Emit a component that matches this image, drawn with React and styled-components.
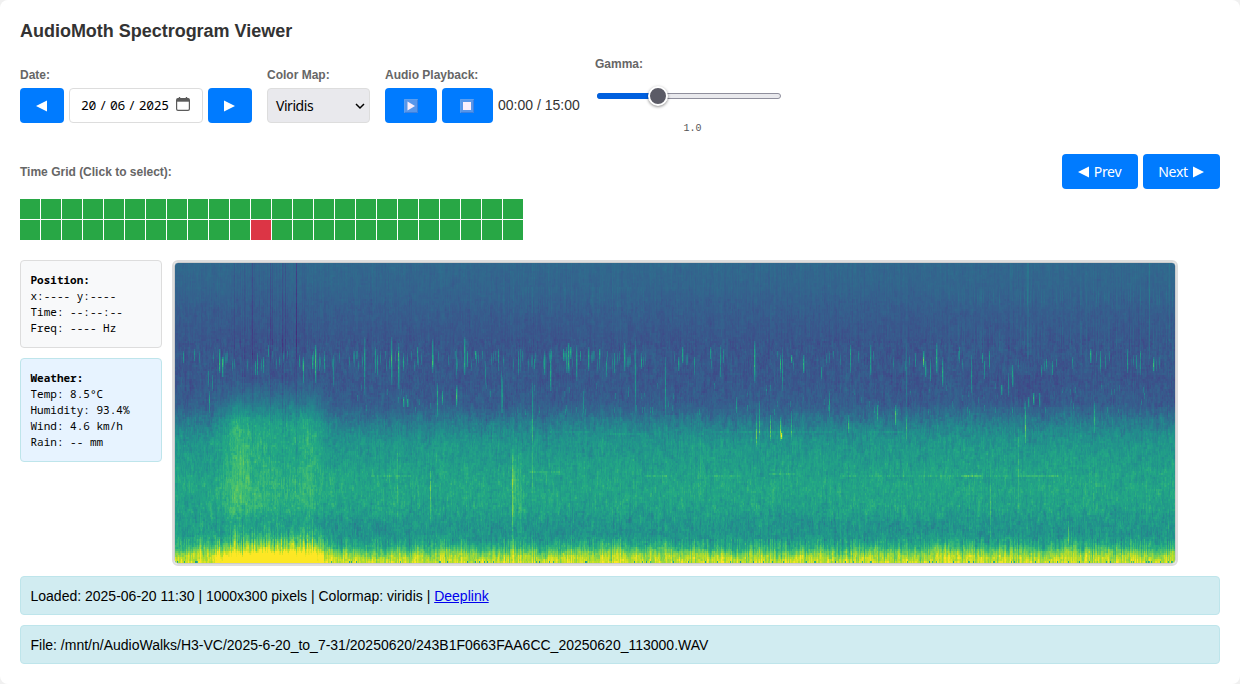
import React, { useLayoutEffect, useRef } from "react";
import styled, { createGlobalStyle, css } from "styled-components";

const GlobalStyle = createGlobalStyle`
  *, *::before, *::after { box-sizing: border-box; }
  body {
    margin: 0;
    background: #f0f0f0;
    color: #000;
    font-family: "Liberation Sans", Arial, sans-serif;
    font-size: 14px;
  }
`;

const mono = `"Noto Sans Mono", "DejaVu Sans Mono", monospace`;

const Page = styled.main`
  height: 684px;
  padding: 20px;
  background: #fff;
  border-radius: 8px;
  display: flex;
  flex-direction: column;
`;

const Title = styled.h1`
  margin: 0 0 15px;
  padding-top: 1px;
  font-size: 18px;
  line-height: 21px;
  letter-spacing: -0.02px;
  color: #333;
`;

const Controls = styled.section`
  display: flex;
  align-items: center;
  gap: 15px;
  height: 77px;
  margin-bottom: 20px;
`;

const Group = styled.div`
  display: flex;
  flex-direction: column;
  gap: 6px;
`;

const Label = styled.label`
  font-size: 12px;
  line-height: 14px;
  font-weight: bold;
  color: #666;
`;

const Row = styled.div`
  display: flex;
  align-items: center;
  gap: 5px;
`;

const Button = styled.button`
  width: ${(p) => p.$w}px;
  height: 35px;
  padding: 0 1px 0 0;
  border: 0;
  border-radius: 4px;
  background: #007bff;
  color: #fff;
  font: 14px/35px "Noto Sans", sans-serif;
  letter-spacing: -0.3px;
  display: flex;
  align-items: center;
  justify-content: center;
  gap: 5px;
`;

const field = css`
  height: 35px;
  border: 1px solid #ddd;
  border-radius: 4px;
  display: flex;
  align-items: center;
`;

const DateField = styled.div`
  ${field}
  width: 134px;
  padding: 0 12px 1px 11px;
  font: 13px ${mono};
  letter-spacing: -0.3px;
  justify-content: space-between;
  svg { margin-top: -3px; }
`;

const DateParts = styled.span`
  display: flex;
  gap: 3.2px;
`;

const Select = styled.div`
  ${field}
  width: 103px;
  padding: 0 4px 0 8px;
  background: #e9e9ed;
  justify-content: space-between;
  font: 14px "Noto Sans", sans-serif;
  letter-spacing: -0.45px;
`;

const Clock = styled.span`
  width: 82px;
  padding-bottom: 1px;
  color: #333;
  white-space: nowrap;
`;

const GammaGroup = styled.div`
  width: 195px;
  height: 77px;
  display: flex;
  flex-direction: column;
`;

const Track = styled.div`
  width: 184px;
  height: 6px;
  margin: 22px 0 0 2px;
  border: 1px solid #8f8f9d;
  border-radius: 3px;
  background: #e9e9ed;
  display: flex;
  align-items: center;
`;

const Fill = styled.div`
  width: 61px;
  height: 6px;
  margin-left: -1px;
  border-radius: 3px 0 0 3px;
  background: #0060df;
  flex: none;
`;

const Thumb = styled.div`
  width: 20px;
  height: 20px;
  margin-left: -10px;
  border: 2px solid #fff;
  border-radius: 50%;
  background: #5b5b66;
  box-shadow: 0 1px 3px rgba(0, 0, 0, 0.45);
  flex: none;
`;

const GammaValue = styled.span`
  margin-top: 23px;
  text-align: center;
  font: 10px/13px "Liberation Mono", monospace;
  color: #555;
`;

const GridHeader = styled.section`
  display: flex;
  align-items: center;
  justify-content: space-between;
  height: 35px;
  margin-bottom: 10px;
`;

const TimeGrid = styled.section`
  display: grid;
  grid-template-columns: repeat(24, 20px);
  grid-auto-rows: 20px;
  gap: 1px;
  margin-bottom: 20px;
`;

const Slot = styled.div`
  background: ${(p) => (p.$active ? "#dc3545" : "#28a745")};
`;

const Viewer = styled.section`
  display: flex;
  align-items: flex-start;
  gap: 10px;
  height: 306px;
  margin-bottom: 10px;
`;

const Side = styled.aside`
  width: 142px;
  display: flex;
  flex-direction: column;
  gap: 10px;
`;

const Info = styled.div`
  padding: 11px 9.5px;
  border: 1px solid ${(p) => (p.$weather ? "#bee5eb" : "#ddd")};
  border-radius: 4px;
  background: ${(p) => (p.$weather ? "#e7f3ff" : "#f8f9fa")};
  font: 11px/16px ${mono};
  white-space: pre;
`;

const Frame = styled.div`
  border: 2px solid #ddd;
  border-radius: 6px;
  overflow: hidden;
`;

const Canvas = styled.canvas`
  display: block;
  width: 1002px;
  height: 302px;
  border: 1px solid #ccc;
  border-radius: 4px;
`;

const Status = styled.div`
  height: 39px;
  padding: 0 9.5px;
  margin-bottom: 10px;
  border: 1px solid #bee5eb;
  border-radius: 4px;
  background: #d1ecf1;
  line-height: 38px;
  a { color: #0000ee; }
`;

const VIRIDIS = [
  [68, 1, 84], [72, 36, 117], [65, 68, 135], [53, 95, 141], [42, 120, 142],
  [33, 145, 140], [34, 168, 132], [68, 191, 112], [122, 209, 81], [189, 223, 38], [253, 231, 37],
];

// Background level for each height of the spectrogram.
const PROFILE = [
  [0, 0.335], [25, 0.32], [45, 0.295], [75, 0.268], [115, 0.275], [138, 0.29], [148, 0.335], [156, 0.395],
  [166, 0.46], [180, 0.52], [200, 0.555], [225, 0.585], [246, 0.565], [256, 0.525], [270, 0.51],
  [278, 0.565], [284, 0.65], [288, 0.76], [293, 0.87], [300, 0.93],
];

// Calls and clicks: x, top, bottom, strength.
const MARKS = [
  [8,89,99,.25],[19,87,97,.25],[44,87,108,.4],[47,95,113,.3],[33,108,122,.2],[37,112,127,.18],[34,128,149,.25],
  [82,90,111,.28],[80,98,110,.28],[88,94,108,.25],[93,83,92,.25],[124,92,103,.25],[128,95,119,.28],[140,82,118,.45],
  [137,93,105,.3],[144,91,107,.2],[149,88,108,.25],[158,92,122,.22],[179,88,103,.18],[189,75,130,.3],[200,85,108,.27],
  [202,92,110,.23],[216,74,120,.3],[223,80,124,.35],[228,91,107,.2],[242,84,100,.28],[257,77,109,.3],[262,120,152,.25],
  [281,123,142,.42],[281,86,115,.2],[289,75,111,.34],[292,88,103,.28],[300,88,94,.35],[310,99,121,.18],[323,87,98,.25],
  [326,108,149,.2],[228,135,142,.35],[232,136,143,.3],[267,128,140,.25],
  [327,115,149,.25],[343,89,110,.24],[345,86,106,.16],[357,119,185,.2],[359,97,104,.28],[369,89,110,.32],[375,87,127,.32],
  [388,87,96,.28],[391,85,109,.3],[393,80,108,.38],[395,84,94,.4],[401,82,116,.3],[405,88,97,.25],[413,85,106,.32],
  [424,86,94,.32],[431,94,112,.25],[439,90,109,.25],[449,80,107,.3],[460,77,149,.23],[466,90,104,.18],[490,95,151,.26],
  [503,95,106,.3],[507,84,99,.34],[519,94,110,.24],[535,85,94,.34],[545,82,113,.26],[548,86,98,.22],[579,79,118,.36],
  [607,85,126,.24],[605,93,112,.24],[616,93,98,.4],[628,92,109,.32],[646,105,114,.24],[654,129,152,.28],[581,152,182,.28],
  [584,138,176,.24],[595,152,177,.28],[605,155,176,.35],[606,171,174,.45],[616,149,176,.26],[561,134,149,.24],[408,129,149,.22],
  [673,152,169,.3],[675,82,108,.28],[695,82,110,.3],[702,142,156,.25],[720,142,160,.34],[731,152,176,.23],[731,82,149,.12],
  [740,90,103,.22],[748,89,103,.35],[750,99,113,.32],[755,97,117,.25],[761,81,109,.32],[767,95,123,.34],[784,84,98,.2],
  [796,92,129,.24],[807,90,99,.28],[809,98,115,.25],[814,88,105,.26],[826,122,130,.3],[833,111,132,.25],[837,102,123,.3],
  [850,139,180,.28],[853,135,142,.3],[858,130,140,.38],[864,131,142,.3],[866,102,112,.2],[871,96,104,.25],[877,98,111,.26],
  [881,97,102,.22],[897,94,104,.22],[919,138,169,.27],[915,87,98,.38],[925,88,108,.26],[930,92,104,.2],[952,87,108,.27],
  [961,92,105,.2],[965,90,110,.2],[978,95,107,.38],[255,205,256,.2],[815,200,285,.12],[843,152,250,.13],[893,258,281,.2],
  [337,182,285,.16],[525,152,230,.06],[357,185,240,.08],[222,170,260,.08],
];

const RIDGES = [
  [196,236,213,.07],[355,385,209,.07],[469,492,213,.1],[532,565,212,.07],[594,620,211,.08],[665,885,213,.045],
  [786,807,213,.11],[848,884,213,.05],[375,418,169,.05],[435,466,170,.05],[534,660,169,.045],[692,724,169,.05],
];

function random(seed) {
  let s = seed;
  return () => {
    s = (s + 0x6d2b79f5) | 0;
    let t = Math.imul(s ^ (s >>> 15), 1 | s);
    t = (t + Math.imul(t ^ (t >>> 7), 61 | t)) ^ t;
    return ((t ^ (t >>> 14)) >>> 0) / 4294967296;
  };
}

const ramp = (v, a, b) => Math.max(0, Math.min(1, (v - a) / (b - a)));

function level(y) {
  let i = 1;
  while (i < PROFILE.length - 1 && PROFILE[i][0] < y) i++;
  const [a, va] = PROFILE[i - 1];
  const [b, vb] = PROFILE[i];
  return va + (vb - va) * ramp(y, a, b);
}

function drawSpectrogram(ctx) {
  const W = 1000, H = 300, rows = 150;
  const rnd = random(243);
  const gauss = () => rnd() + rnd() + rnd() - 1.5;
  const data = new Float32Array(W * rows);
  const columns = Array.from({ length: W }, () => gauss());
  const streaks = Array.from({ length: W }, () => rnd());
  // Slow drift along time, so that edges are not straight.
  const drift = [];
  let d = 0;
  for (let x = 0; x < W; x++) drift.push((d = d * 0.86 + gauss() * 0.5));
  const held = new Float32Array(W);
  const darks = { 59: 0.05, 77: 0.1, 79: 0.04, 95: 0.07, 97: 0.04, 107: 0.07, 110: 0.07, 121: 0.11, 69: 0.04, 129: 0.04 };

  for (let r = 0; r < rows; r++) {
    const y = r * 2;
    const noise = y < 35 ? 0.018 : y < 75 ? 0.024 : y < 150 ? 0.04 : y < 240 ? 0.056 : 0.066;
    let near = 0;
    for (let x = 0; x < W; x++) {
      const base = level(y + (y > 125 && y < 295 ? drift[x] * 2.5 : 0));
      held[x] = held[x] * 0.55 + gauss() * 0.85;
      near = near * 0.4 + held[x] * 0.92;
      let v = base + near * noise + columns[x] * (y > 274 ? 0.075 : 0.014);
      const gx = x + drift[x] * 3;
      const gust = ramp(gx, 36, 60) * (1 - ramp(gx, 136, 158));
      const core = Math.exp(-Math.pow((x - 64) / 14, 2)) + 0.45 * Math.exp(-Math.pow((x - 132) / 15, 2)) + 0.35 * Math.exp(-Math.pow((x - 92) / 14, 2));
      v += gust * (0.12 * ramp(y, 114, 145) * (1 - ramp(y, 156, 190)) + 0.03 * ramp(y, 150, 190));
      v += gust * 0.2 * ramp(y + columns[x] * 7 + drift[x] * 3, 264, 286);
      v += core * (0.07 + streaks[x] * 0.04) * ramp(y, 122, 165) * (1 - ramp(y, 230, 285));
      if (x < 45) v += 0.04 * ramp(y, 238, 275);
      if (x > 24 && x < 31) v += 0.1 * ramp(y, 246, 260) * streaks[x];
      if (x > 715 && y > 110 && y < 144) v -= 0.012 + 0.012 * Math.sin(x / 26);
      if (darks[x]) v -= darks[x] * (y < 96 ? 1 : y < 230 ? 0.5 : 0);
      if (x > 58 && x < 135 && y < 85 && streaks[x] > 0.7) v -= 0.02;
      if (x > 325 && x < 470 && y > 23 && y < 49 && streaks[x] > 0.75) v += 0.022;
      if (x > 775 && streaks[x] > 0.75) {
        v += 0.035 * Math.sin(Math.PI * ramp(y, 22, 46)) + 0.035 * Math.sin(Math.PI * ramp(y, 53, 94));
      }
      if ((x === 852 || x === 853 || x === 974 || x === 994) && y < 95) v += 0.05;
      if (x > 336 && x < 347) v += (0.05 + 0.06 * streaks[x]) * ramp(y, 180, 215) * (1 - ramp(y, 245, 276));
      if (y > 86 && y < 108) {
        const busy = x < 470 ? 0.82 : 0.93;
        if (streaks[x] > busy) {
          const top = 82 + ((x * 13) % 14);
          v += 0.15 * Math.sin(Math.PI * ramp(y, top, top + 14));
        }
      }
      data[r * W + x] = v;
    }
  }
  for (const [x, top, bottom, strength] of MARKS) {
    for (let r = Math.floor(top / 2); r <= bottom / 2; r++) {
      const shape = Math.pow(Math.sin(Math.PI * ramp(r * 2 + 1, top - 2, bottom + 3)), 0.6);
      data[r * W + x] += strength * shape * (0.78 + rnd() * 0.3);
      if (strength > 0.29) data[r * W + x + 1] += strength * shape * 0.3;
    }
  }
  for (const [from, to, y, strength] of RIDGES) {
    const r = Math.floor(y / 2);
    for (let x = from; x < to; x++) data[r * W + x] += strength * (0.4 + rnd() * 0.8);
  }
  // Faint scattered calls just above the dense band.
  for (let i = 0; i < 90; i++) {
    const x = 155 + Math.floor(rnd() * 835);
    const r = 60 + Math.floor(rnd() * 14);
    for (let k = 0; k < 3; k++) data[(r + k) * W + x] += 0.06 + rnd() * 0.08;
  }
  // Quiet gaps along the lowest frequency row.
  for (let x = 0; x < W; x++) {
    if ((x < 35 || x > 150) && rnd() > 0.9) data[149 * W + x] -= 0.3;
  }

  const image = ctx.createImageData(W, H);
  for (let y = 0; y < H; y++) {
    for (let x = 0; x < W; x++) {
      const v = data[(y >> 1) * W + x];
      const t = Math.max(0, Math.min(0.9999, v)) * 10;
      const i = Math.floor(t);
      const f = t - i;
      const o = (y * W + x) * 4;
      for (let c = 0; c < 3; c++) image.data[o + c] = VIRIDIS[i][c] + (VIRIDIS[i + 1][c] - VIRIDIS[i][c]) * f;
      image.data[o + 3] = 255;
    }
  }
  ctx.putImageData(image, 0, 0);
}

function Spectrogram() {
  const ref = useRef(null);
  useLayoutEffect(() => drawSpectrogram(ref.current.getContext("2d")), []);
  return <Frame><Canvas ref={ref} width={1000} height={300} /></Frame>;
}

const Arrow = ({ left }) => (
  <svg width="11" height="12" viewBox="0 0 11 12" fill="#fff">
    <path d={left ? "M11 .5v11L0 6z" : "M0 .5v11L11 6z"} />
  </svg>
);

const MediaIcon = ({ stop }) => (
  <svg width="14" height="14" viewBox="0 0 14 14">
    <rect width="14" height="14" rx="1" fill="#5796ea" />
    <path d="M.5 13.5V.5h13" fill="none" stroke="#5c9ff0" />
    <path d="M13.5 1v12.5H1" fill="none" stroke="#3c80e0" />
    {stop ? <rect x="3" y="3" width="8" height="8" fill="#fceffc" /> : <path d="M3.5 2.5v9L11 7z" fill="#fceffc" />}
  </svg>
);

const CalendarIcon = () => (
  <svg width="14" height="14" viewBox="0 0 14 14" fill="none" stroke="#5b5b5b">
    <rect x=".6" y="1.7" width="12.8" height="11.7" rx="1.4" strokeWidth="1.2" />
    <path d="M1 3.2h12" strokeWidth="3" />
    <path d="M3.5 0v2M10.5 0v2" strokeWidth="1.4" />
  </svg>
);

export default function App() {
  return (
    <>
      <GlobalStyle />
      <Page>
        <Title>AudioMoth Spectrogram Viewer</Title>
        <Controls>
          <Group>
            <Label>Date:</Label>
            <Row>
              <Button $w={44} aria-label="Previous day"><Arrow left /></Button>
              <DateField>
                <DateParts><span>20</span><span>/</span><span>06</span><span>/</span><span>2025</span></DateParts>
                <CalendarIcon />
              </DateField>
              <Button $w={44} aria-label="Next day"><Arrow /></Button>
            </Row>
          </Group>
          <Group>
            <Label>Color Map:</Label>
            <Select>
              Viridis
              <svg width="10" height="10" viewBox="0 0 10 10" fill="none" stroke="#000" strokeWidth="1.5">
                <path d="M1 3l4 4 4-4" />
              </svg>
            </Select>
          </Group>
          <Group>
            <Label>Audio Playback:</Label>
            <Row>
              <Button $w={52} aria-label="Play"><MediaIcon /></Button>
              <Button $w={51} aria-label="Stop"><MediaIcon stop /></Button>
              <Clock>00:00 / 15:00</Clock>
            </Row>
          </Group>
          <GammaGroup>
            <Label>Gamma:</Label>
            <Track><Fill /><Thumb /></Track>
            <GammaValue>1.0</GammaValue>
          </GammaGroup>
        </Controls>
        <GridHeader>
          <Label>Time Grid (Click to select):</Label>
          <Row>
            <Button $w={76}><Arrow left /> Prev</Button>
            <Button $w={77}>Next <Arrow /></Button>
          </Row>
        </GridHeader>
        <TimeGrid>
          {Array.from({ length: 48 }, (_, i) => <Slot key={i} $active={i === 35} />)}
        </TimeGrid>
        <Viewer>
          <Side>
            <Info><b>Position:</b>{"\nx:---- y:----\nTime: --:--:--\nFreq: ---- Hz"}</Info>
            <Info $weather><b>Weather:</b>{"\nTemp: 8.5°C\nHumidity: 93.4%\nWind: 4.6 km/h\nRain: -- mm"}</Info>
          </Side>
          <Spectrogram />
        </Viewer>
        <Status>Loaded: 2025-06-20 11:30 | 1000x300 pixels | Colormap: viridis | <a href="#deeplink">Deeplink</a></Status>
        <Status>File: /mnt/n/AudioWalks/H3-VC/2025-6-20_to_7-31/20250620/243B1F0663FAA6CC_20250620_113000.WAV</Status>
      </Page>
    </>
  );
}
